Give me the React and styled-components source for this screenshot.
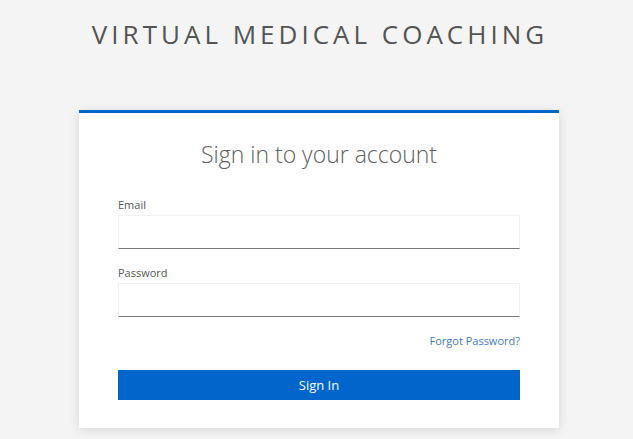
import styled, { createGlobalStyle } from "styled-components";

const GlobalStyle = createGlobalStyle`
	html, body {
		margin: 0;
		padding: 0;
		background: #f4f4f4;
		font-family: "Open Sans", "Noto Sans", sans-serif;
	}
`;

export default function App() {
	return (
		<Page>
			<GlobalStyle />
			<Brand>VIRTUAL MEDICAL COACHING</Brand>
			<Card>
				<CardTitle>Sign in to your account</CardTitle>
				<Field>
					<Label htmlFor="email">Email</Label>
					<Input id="email" type="email" />
				</Field>
				<Field>
					<Label htmlFor="password">Password</Label>
					<Input id="password" type="password" />
				</Field>
				<Links>
					<ForgotLink href="#">Forgot Password?</ForgotLink>
				</Links>
				<SubmitButton type="button">Sign In</SubmitButton>
			</Card>
		</Page>
	);
}

const Page = styled.div`
	display: flex;
	flex-direction: column;
	align-items: center;
	min-height: 100vh;
	padding-top: 16px;
	box-sizing: border-box;
`;

const Brand = styled.h1`
	margin: 0 0 58px 0;
	font-size: 26px;
	font-weight: 400;
	letter-spacing: 4px;
	line-height: 36px;
	color: #545454;
	padding-left: 7px;
`;

const Card = styled.div`
	display: flex;
	flex-direction: column;
	width: 480px;
	box-sizing: border-box;
	margin-left: 5px;
	padding: 26px 39px 28px 39px;
	background: #ffffff;
	border-top: 3px solid #0066cc;
	box-shadow: 0 2px 10px rgba(0, 0, 0, 0.12);
`;

const CardTitle = styled.h2`
	margin: 0 0 28px 0;
	text-align: center;
	font-size: 23px;
	font-weight: 300;
	line-height: 30px;
	color: #606060;
`;

const Field = styled.div`
	display: flex;
	flex-direction: column;
	margin-bottom: 16px;

	&:last-of-type {
		margin-bottom: 14px;
	}
`;

const Label = styled.label`
	font-size: 11px;
	line-height: 15px;
	color: #555;
	margin-bottom: 3px;
`;

const Input = styled.input`
	height: 34px;
	box-sizing: border-box;
	border: 1px solid #f0f0f0;
	border-bottom: 1px solid #7a7a7a;
	background: #fff;
	outline: none;
	padding: 0 8px;
	font-family: inherit;
	font-size: 13px;
`;

const Links = styled.div`
	display: flex;
	justify-content: flex-end;
	margin-bottom: 22px;
`;

const ForgotLink = styled.a`
	font-size: 11px;
	line-height: 15px;
	color: #3f7bbf;
	text-decoration: none;
`;

const SubmitButton = styled.button`
	height: 30px;
	border: none;
	background: #0066cc;
	color: #ffffff;
	font-family: inherit;
	font-size: 13px;
	cursor: pointer;
`;
